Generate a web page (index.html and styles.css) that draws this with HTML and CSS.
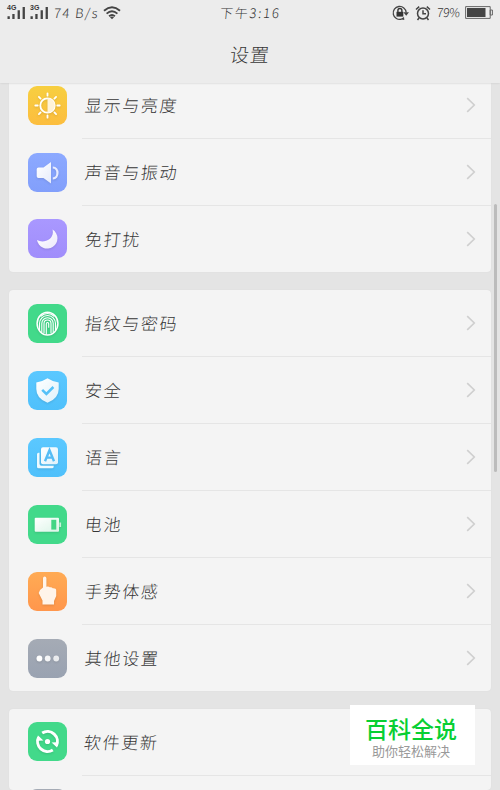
FILE: index.html
```html
<!DOCTYPE html>
<html lang="zh-CN">
<head>
<meta charset="utf-8">
<title>设置</title>
<link rel="stylesheet" href="styles.css">
</head>
<body>
<svg class="defs" width="0" height="0" aria-hidden="true">
  <defs>
    <linearGradient id="w" x1="0" y1="0" x2="1" y2="1"><stop offset="0" stop-color="#fff"/><stop offset="1" stop-color="#fff" stop-opacity=".82"/></linearGradient>
    <symbol id="chev" viewBox="0 0 10 16"><path d="M1.2 1.2 8.3 8 1.2 14.8" fill="none" stroke="#cfcfcf" stroke-width="1.6"/></symbol>
    <symbol id="signal" viewBox="0 0 18 12"><path d="M.5 9.2h2.3V12H.5zM5.3 7h2.3v5H5.3zM10.6 3.3h2.3V12h-2.3zM15.6 0h2.3v12h-2.3z" fill="#444"/></symbol>
  </defs>
</svg>
<header class="header">
  <div class="status">
    <div class="status-left">
      <span class="signal"><b>4G</b><svg width="18" height="12"><use href="#signal"/></svg></span>
      <span class="signal"><b>3G</b><svg width="18" height="12"><use href="#signal"/></svg></span>
      <span class="hand speed">74 B/s</span>
      <svg class="wifi" width="18" height="14" viewBox="0 0 18 14" fill="none" stroke="#444" stroke-width="1.9"><path d="M1 4.7Q9-2.2 17 4.7M3.6 7.6Q9 2.8 14.4 7.6M6.1 10.3Q9 7.8 11.9 10.3"/><path d="M7 11.2Q9 9.7 11 11.2L9 13.3z" fill="#444" stroke="none"/></svg>
    </div>
    <div class="hand clock">下午3:16</div>
    <div class="status-right">
      <svg width="17" height="16" viewBox="0 0 17 16"><path d="M9.5 14.2A6.5 6.5 0 1 1 14.2 7.5" fill="none" stroke="#444" stroke-width="1.3"/><path d="M11.4 7.3H17l-2.8 3.4zM8.2 14.2l3.8-2.2.3 3z" fill="#444"/><path d="M4.5 6.8h6.8v4.8H4.5z" fill="#333"/><path d="M5.9 7V5.5a2 2 0 0 1 4 0V7" fill="none" stroke="#333" stroke-width="1.4"/></svg>
      <svg width="16" height="16" viewBox="0 0 16 16" fill="none" stroke="#444" stroke-width="1.5"><circle cx="8" cy="8.5" r="5.5"/><path d="M8 5.2v3.6h3M1 4.5 4.2 1.6M15 4.5l-3.2-2.9M4 13l-1.5 2M12 13l1.5 2"/></svg>
      <span class="hand percent">79%</span>
      <svg class="battery" width="28" height="13" viewBox="0 0 28 13"><path d="M.6.6h24.6v11.8H.6zM25.2 4h2.2v5h-2.2z" fill="none" stroke="#666"/><path d="M2 2h18.5v9H2z" fill="#444"/></svg>
    </div>
  </div>
  <h1 class="hand title">设置</h1>
</header>

<main class="list">
  <section class="card card-first">
    <div class="row"><span class="icon yellow"><svg viewBox="0 0 39 39"><g stroke="#fff" stroke-width="1.8" stroke-linecap="round"><path d="M19.5 7.3v2.4M19.5 29.3v2.4M7.3 19.5h2.4M29.3 19.5h2.4M10.9 10.9l1.7 1.7M26.4 26.4l1.7 1.7M10.9 28.1l1.7-1.7M26.4 12.6l1.7-1.7"/></g><circle cx="19.5" cy="19.5" r="7.2" fill="none" stroke="#fff" stroke-width="1.8"/><path d="M19.5 12.3a7.2 7.2 0 0 1 0 14.4z" fill="#fff3d8"/></svg></span><span class="hand label">显示与亮度</span><svg class="chev"><use href="#chev"/></svg></div>
    <div class="row"><span class="icon blue"><svg viewBox="0 0 39 39"><path d="M10.5 14.500H15.5L23 9v21.500L15.500 25h-5q-1.800 0-1.800-1.800v-6.900q0-1.800 1.800-1.800z" fill="url(#w)"/><path d="M24.800 14.500c6.200.2 6.200 10.800 0 11" fill="none" stroke="#e8ecff" stroke-width="2.200"/></svg></span><span class="hand label">声音与振动</span><svg class="chev"><use href="#chev"/></svg></div>
    <div class="row"><span class="icon purple"><svg viewBox="0 0 39 39"><path d="M24.500 10.500A10.300 10.300 0 1 1 9 21C16 25 27 20 24.500 10.500z" fill="url(#w)"/></svg></span><span class="hand label">免打扰</span><svg class="chev"><use href="#chev"/></svg></div>
  </section>

  <section class="card card-main">
    <div class="row"><span class="icon green"><svg viewBox="0 0 39 39" fill="none" stroke="#fff" stroke-width="1.1"><ellipse cx="19.5" cy="19.6" rx="10.4" ry="11.4" stroke-width="1.5"/><path d="M11.5 26v-6.500a8 8 0 0 1 16 0V26M13.800 28v-8.500a5.700 5.700 0 0 1 11.400 0V28M16 29.500v-10a3.500 3.500 0 0 1 7 0v10M18.300 30.500V19.800q0-1.300 1.200-1.300t1.200 1.300v4M12.500 12.500q7-6 14 0"/></svg></span><span class="hand label">指纹与密码</span><svg class="chev"><use href="#chev"/></svg></div>
    <div class="row"><span class="icon sky"><svg viewBox="0 0 39 39"><path d="M19.500 7.200q5.500 3.600 11.200 4.200V18q0 9.500-11.200 13.800Q8.300 27.500 8.300 18v-6.600q5.700-.6 11.200-4.200z" fill="url(#w)"/><path d="M14.200 18.800l4.200 4.200 7-7" fill="none" stroke="#55c1f8" stroke-width="2.500"/></svg></span><span class="hand label">安全</span><svg class="chev"><use href="#chev"/></svg></div>
    <div class="row"><span class="icon sky"><svg viewBox="0 0 39 39"><rect x="13" y="9.300" width="17" height="17" rx="2" fill="url(#w)"/><path d="M11.500 14.700H10.500q-1.500 0-1.500 1.500v12.600q0 1.500 1.500 1.500h13.800q1.500 0 1.500-2.500H13.500q-2 0-2-2z" fill="#eefaff"/><path d="M17 23.200l4.500-11 4.500 11M18.500 19.600h6" fill="none" stroke="#55bcf5" stroke-width="2.400"/></svg></span><span class="hand label">语言</span><svg class="chev"><use href="#chev"/></svg></div>
    <div class="row"><span class="icon green"><svg viewBox="0 0 39 39"><rect x="6.700" y="12.700" width="24.300" height="14" rx="1" fill="url(#w)"/><path d="M23.300 14.800h5v9.800h-5z" fill="#43d585"/><path d="M31.400 17.500h1.700v4.500h-1.700z" fill="#c3f3d8"/></svg></span><span class="hand label">电池</span><svg class="chev"><use href="#chev"/></svg></div>
    <div class="row"><span class="icon orange"><svg viewBox="0 0 39 39"><path d="M15 15.500V6.200q0-1.700 1.700-1.700t1.700 1.700v8.500q2.200-.8 3.300.6 2.200-.5 3 .9 3.500-.4 3.500 2.300v5.500l-2.200 5V32.500H14.500V28.500L10.700 21q1-3.600 4.300-5.500z" fill="#fff4ea"/></svg></span><span class="hand label">手势体感</span><svg class="chev"><use href="#chev"/></svg></div>
    <div class="row"><span class="icon gray"><svg viewBox="0 0 39 39" fill="#fff"><circle cx="11.400" cy="19.500" r="2.900"/><circle cx="19.700" cy="19.500" r="2.900" opacity=".9"/><circle cx="28.200" cy="19.500" r="2.900" opacity=".8"/></svg></span><span class="hand label">其他设置</span><svg class="chev"><use href="#chev"/></svg></div>
  </section>

  <section class="card card-last">
    <div class="row row-update"><span class="icon green"><svg viewBox="0 0 39 39"><g fill="none" stroke="#fff" stroke-width="3"><path d="M14.200 11.100A9.900 9.900 0 0 1 28.300 24M24.800 27.900A9.900 9.900 0 0 1 10.700 15"/></g><path d="M9.800 13.200l5.600 5.300-4.600.3zM29.200 25.800l-5.600-5.300 4.600-.3z" fill="#fff"/><circle cx="19.500" cy="19.500" r="2.600" fill="#fff"/></svg></span><span class="hand label">软件更新</span></div>
    <div class="row"><span class="icon gray"></span></div>
  </section>
</main>
<div class="scrollbar"></div>
<aside class="badge"><strong>百科全说</strong><span>助你轻松解决</span></aside>
</body>
</html>
```
FILE: styles.css
```css
* { box-sizing: border-box; }
body {
  margin: 0;
  height: 790px;
  overflow: hidden;
  position: relative;
  display: flex;
  flex-direction: column;
  background: #e4e4e4;
  color: #363636;
  font-family: "Noto Sans CJK SC", sans-serif;
}
.defs { position: absolute; }
.header {
  flex: none;
  height: 83px;
  background: #ececec;
  box-shadow: 0 0 2px #c8c8c8;
  position: relative;
  z-index: 1;
}
.status {
  display: grid;
  grid-template-columns: 1fr auto 1fr;
  align-items: center;
  height: 25px;
  padding: 0 7px;
  font-size: 13px;
}
.status-left, .status-right { display: flex; align-items: center; }
.status-right { justify-content: flex-end; gap: 6px; }
.hand {
  display: inline-block;
  font-weight: 300;
  transform: skewX(-6deg);
  white-space: nowrap;
}
.signal {
  position: relative;
  width: 23px;
  height: 13px;
  display: flex;
  align-items: flex-end;
}
.signal b {
  position: absolute;
  left: 0;
  top: -2px;
  font: bold 7px/8px "Liberation Sans", sans-serif;
}
.signal svg { flex: none; }
.speed { width: 47px; margin-left: 1px; letter-spacing: 1.5px; }
.wifi { margin-left: 2px; }
.clock { letter-spacing: 1.8px; }
.percent { font-size: 12px; width: 23px; margin-right: -1px; letter-spacing: -.2px; position: relative; top: -1px; }
.title {
  display: block;
  margin: 12px 0 0;
  text-align: center;
  font-size: 19px;
  line-height: 34px;
  letter-spacing: 1px;
}
.list {
  flex: 1;
  min-height: 0;
  overflow: hidden;
  padding: 0 9px;
  display: flex;
  flex-direction: column;
  gap: 18px;
}
.card {
  flex: none;
  background: #f4f4f4;
  border-radius: 4px;
  box-shadow: 0 0 1px #d4d4d4;
}
.card-first { margin-top: -11px; }
.card-last { height: 81px; overflow: hidden; }
.row {
  height: 67px;
  display: flex;
  align-items: center;
  padding: 0 15px 1px 19px;
  background: linear-gradient(#e5e5e5, #e5e5e5) 73px 100% / 100% 1px no-repeat;
}
.row:last-child { background: none; height: 66px; padding-bottom: 0; }
.card-first .row:last-child { padding-bottom: 1px; }
.card-last .row { padding-bottom: 2px; }
.icon {
  flex: none;
  width: 39px;
  height: 39px;
  border-radius: 9px;
}
.icon svg { display: block; filter: drop-shadow(0 1px 1px rgba(0, 0, 0, .12)); }
.label {
  margin-left: 18px;
  flex: 1;
  font-size: 17px;
  line-height: 24px;
  letter-spacing: 1.7px;
}
.row-update .label { margin-left: 17px; }
.chev { width: 10px; height: 16px; }
.yellow { background: linear-gradient(#f7cf40, #fcbd3e); }
.blue { background: linear-gradient(#8ca9ff, #829ffb); }
.purple { background: linear-gradient(#a998ff, #a08dfb); }
.green { background: #42d98a; }
.sky { background: linear-gradient(#5bc8ff, #4fc0fb); }
.orange { background: linear-gradient(#ffab54, #ff964c); }
.gray { background: linear-gradient(#a5abb5, #99a2b1); }
.scrollbar {
  position: absolute;
  z-index: 2;
  right: 3px;
  top: 204px;
  width: 3px;
  height: 268px;
  border-radius: 2px;
  background: #bcbcbc;
}
.badge {
  position: absolute;
  z-index: 3;
  left: 350px;
  top: 705px;
  width: 125px;
  height: 60px;
  padding: 9px 3px 0 0;
  background: #fff;
  display: flex;
  flex-direction: column;
  align-items: center;
}
.badge strong {
  font-size: 23px;
  line-height: 29px;
  font-weight: 500;
  color: #08cf33;
}
.badge span { font-size: 13px; line-height: 16px; color: #999; }
```
